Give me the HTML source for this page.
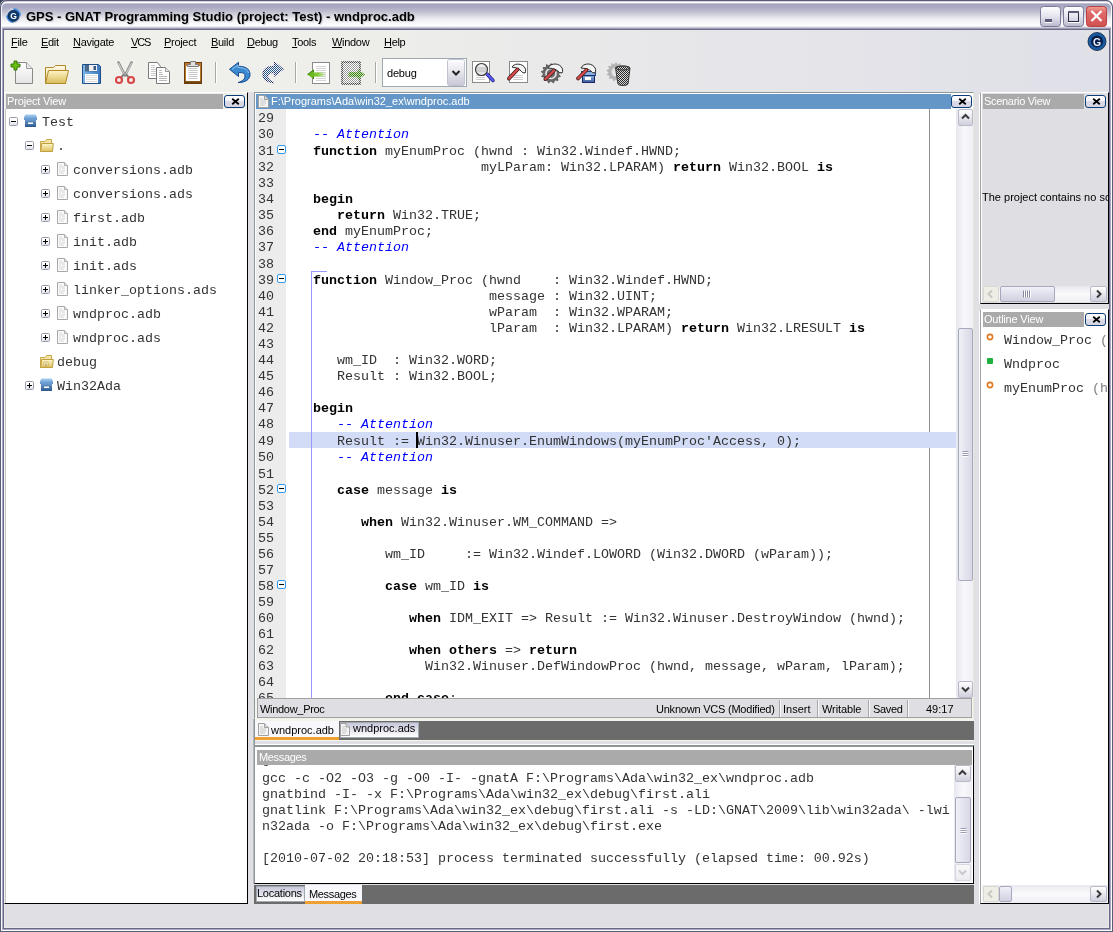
<!DOCTYPE html><html><head><meta charset="utf-8"><style>
*{margin:0;padding:0;box-sizing:border-box}
html,body{width:1113px;height:932px;overflow:hidden}
body{position:relative;background:#3a4658;font-family:"Liberation Sans",sans-serif;font-size:11px;color:#000}
.a{position:absolute}
.t{position:absolute;white-space:pre;line-height:12px}
.m{font-family:"Liberation Mono",monospace;font-size:13.333px;line-height:16px;white-space:pre;position:absolute;color:#333}
.m .k{color:#000}
.k{font-weight:bold}
.c{font-style:italic;color:#0000ff}
#win{will-change:transform;left:0;top:0;width:1113px;height:932px;border-radius:6px 6px 0 0;background:#e0dfe3;overflow:hidden}
#title{left:0;top:0;width:1113px;height:30px;border-radius:7px 7px 0 0;background:linear-gradient(#5c5c7a 0,#5c5c7a 1px,#a8a8c0 1px,#ffffff 2px,#ffffff 3px,#dcdce6 3px,#a5a5c0 4px,#a9a9c3 7px,#bcbccd 11px,#d4d4de 15px,#ececf0 19px,#f8f8fa 23px,#ffffff 26px,#d8d8e4 27px,#b0b0c6 28.3px,#6b6b88 29px,#6b6b88 30px)}
#tframe{left:0;top:0;width:1113px;height:32px;border:1px solid #5c5c7a;border-bottom:none;border-radius:7px 7px 0 0}
#tframe2{left:1px;top:1.5px;width:1111px;height:30px;border:1.5px solid #fff;border-bottom:none;border-radius:6px 6px 0 0;opacity:.9}
#ttext{left:26px;top:9px;font-size:13px;font-weight:bold;line-height:16px;white-space:nowrap;text-shadow:1px 1px 1px rgba(120,120,140,.35)}
#lb{left:0;top:29px;width:4px;height:903px;background:linear-gradient(to right,#5c5c78 0,#5c5c78 1px,#e8e8f0 1px,#e8e8f0 2px,#6e6e8a 2px,#6e6e8a 4px)}
#rb{left:1109px;top:29px;width:4px;height:903px;background:linear-gradient(to right,#6e6e8a 0,#6e6e8a 2px,#e8e8f0 2px,#e8e8f0 3px,#5c5c78 3px)}
#bb{left:0;top:928px;width:1113px;height:4px;background:linear-gradient(#6e6e8a 0,#6e6e8a 2px,#f0f0f6 2px,#f0f0f6 3px,#5c5c78 3px)}
#bar{left:4px;top:30px;width:1105px;height:62px;background:linear-gradient(to right,#f2f2ec 0,#ededea 35%,#e6e6ea 65%,#dfe0e8 100%)}
.menu{top:36px;letter-spacing:-0.3px}
.menu u{text-decoration:underline;text-underline-offset:1px}
.ptitle{background:#aaaaaa;color:#fff;height:15px}
.ptitle span{position:absolute;left:1px;top:1px;line-height:12px;white-space:nowrap}
.xb{width:21px;height:13px;border:1px solid #0a3c78;border-radius:3px;background:linear-gradient(#ffffff 0,#f6f6fa 40%,#dcdce8 50%,#d4d4e2 100%)}
.exp{width:9px;height:9px;border:1px solid #9898a8;border-radius:1.5px;background:linear-gradient(#ffffff 30%,#dfe4ee)}
.exp:before{content:"";position:absolute;left:1px;top:3px;width:5px;height:1px;background:#000;box-shadow:0 0 0.4px #000}
.exp.p:after{content:"";position:absolute;left:3px;top:1px;width:1px;height:5px;background:#000;box-shadow:0 0 0.4px #000}
.fold{width:9px;height:9px;border:1px solid #3399ee;border-radius:2px;background:#fff}
.fold:before{content:"";position:absolute;left:1px;top:3px;width:5px;height:1px;background:#000}
</style></head><body>
<div class="a" style="left:1093px;top:0;width:20px;height:20px;background:#ffffff"></div>
<div id="win" class="a">
<div id="title" class="a"></div><div id="tframe" class="a"></div><div id="tframe2" class="a"></div>
<div id="ttext" class="a">GPS - GNAT Programming Studio (project: Test) - wndproc.adb</div>
<div class="a" style="left:0;top:29px;width:1113px;height:903px;border:1px solid #5c5c78;border-top:none"></div>
<div class="a" style="left:1px;top:29px;width:1111px;height:902px;border:1px solid #fafafc;border-top:none"></div>
<div class="a" style="left:2px;top:29px;width:1109px;height:901px;border:1px solid #a8a8c0;border-top:none"></div>
<div class="a" style="left:3px;top:29px;width:1107px;height:900px;border:1px solid #6a6a88;border-top:none"></div>
<div class="a" style="left:4px;top:904px;width:1105px;height:24px;border-left:1px solid #e8e8ea;border-bottom:1px solid #e8e8ea;border-right:1px solid #e8e8ea"></div>
<div id="bar" class="a"></div>

<svg class="a" style="left:0;top:0" width="1113" height="100" viewBox="0 0 1113 100">
<defs>
 <linearGradient id="gPage" x1="0" y1="0" x2="0" y2="1"><stop offset="0" stop-color="#ffffff"/><stop offset="1" stop-color="#e4e4e4"/></linearGradient>
 <linearGradient id="gFold" x1="0" y1="0" x2="0" y2="1"><stop offset="0" stop-color="#fff4c8"/><stop offset="1" stop-color="#d8bc58"/></linearGradient>
 <linearGradient id="gFoldB" x1="0" y1="0" x2="0" y2="1"><stop offset="0" stop-color="#fffbe8"/><stop offset="1" stop-color="#e8d088"/></linearGradient>
 <linearGradient id="gBlue" x1="0" y1="0" x2="1" y2="0"><stop offset="0" stop-color="#80b8e8"/><stop offset="1" stop-color="#3a78c0"/></linearGradient>
 <linearGradient id="gClip" x1="0" y1="0" x2="0" y2="1"><stop offset="0" stop-color="#c07830"/><stop offset="0.8" stop-color="#b08020"/><stop offset="1" stop-color="#5a3008"/></linearGradient>
 <linearGradient id="gBox" x1="0" y1="0" x2="0" y2="1"><stop offset="0" stop-color="#90b0e0"/><stop offset="1" stop-color="#3a5a98"/></linearGradient>
 <linearGradient id="gRedBtn" x1="0" y1="0" x2="0" y2="1"><stop offset="0" stop-color="#f0a090"/><stop offset="0.3" stop-color="#e06a6a"/><stop offset="1" stop-color="#d05050"/></linearGradient>
 <linearGradient id="gWinBtn" x1="0" y1="0" x2="0" y2="1"><stop offset="0" stop-color="#ffffff"/><stop offset="0.5" stop-color="#e4e4ee"/><stop offset="1" stop-color="#b8b8cc"/></linearGradient>
 <pattern id="dBlue" width="2" height="2" patternUnits="userSpaceOnUse"><rect width="2" height="2" fill="#f4f4f6"/><rect width="1" height="1" fill="#2a5a88"/><rect x="1" y="1" width="1" height="1" fill="#2a5a88"/></pattern>
 <pattern id="dNavy" width="2" height="2" patternUnits="userSpaceOnUse"><rect width="2" height="2" fill="#f4f4f6"/><rect width="1" height="1" fill="#28306a"/><rect x="1" y="1" width="1" height="1" fill="#28306a"/></pattern>
 <pattern id="dGray" width="2" height="2" patternUnits="userSpaceOnUse"><rect width="2" height="2" fill="#ffffff"/><rect width="1" height="1" fill="#9a9a9a"/><rect x="1" y="1" width="1" height="1" fill="#9a9a9a"/></pattern>
 <pattern id="dGreen" width="2" height="2" patternUnits="userSpaceOnUse"><rect width="2" height="2" fill="#c8d8b8"/><rect width="1" height="1" fill="#3a8a10"/><rect x="1" y="1" width="1" height="1" fill="#3a8a10"/></pattern>
 <pattern id="dDark" width="2" height="2" patternUnits="userSpaceOnUse"><rect width="2" height="2" fill="#d8d8d8"/><rect width="1" height="1" fill="#2a2a2a"/><rect x="1" y="1" width="1" height="1" fill="#2a2a2a"/></pattern>
</defs>
<!-- title G logo -->
<circle cx="13.5" cy="15.5" r="7.5" fill="#c8d0e0"/>
<path d="M13.5 8 A7.5 7.5 0 0 1 21 15.5 L18 15.5 A4.5 4.5 0 0 0 13.5 11Z" fill="#4a90e0"/>
<path d="M13.5 23 A7.5 7.5 0 0 1 6 15.5 L9 15.5 A4.5 4.5 0 0 0 13.5 20Z" fill="#4a90e0"/>
<circle cx="13.5" cy="15.8" r="5.6" fill="#0e3a6e" stroke="#061a38" stroke-width="0.6"/>
<text x="13.6" y="18.8" font-family="Liberation Sans" font-weight="bold" font-size="8.5" fill="#fff" text-anchor="middle">G</text>
<!-- window buttons -->
<rect x="1040.5" y="6.5" width="20" height="20" rx="3" fill="url(#gWinBtn)" stroke="#7a7a98"/>
<rect x="1045" y="19" width="7" height="3" fill="#5a5a78"/><rect x="1045" y="22" width="7" height="1" fill="#fff"/>
<rect x="1063.5" y="6.5" width="20" height="20" rx="3" fill="url(#gWinBtn)" stroke="#7a7a98"/>
<rect x="1068.5" y="11.5" width="10" height="10" fill="none" stroke="#2a2a40"/><rect x="1068" y="11" width="11" height="2" fill="#5a5a78"/><rect x="1068" y="22" width="12" height="1" fill="#fff"/>
<rect x="1086.5" y="6.5" width="20" height="20" rx="3" fill="url(#gRedBtn)" stroke="#b84040"/>
<path d="M1091.5 11 L1101.5 21 M1101.5 11 L1091.5 21" stroke="#fff" stroke-width="2.2"/>
<!-- right G logo -->
<rect x="1085" y="30" width="23" height="24" fill="#e2e2e6"/>
<circle cx="1097" cy="41.5" r="9" fill="#1a5aa0" stroke="#0a2040" stroke-width="0.8"/>
<circle cx="1097" cy="41.5" r="6" fill="#061e48"/>
<text x="1097.2" y="45.5" font-family="Liberation Sans" font-weight="bold" font-size="10.5" fill="#e8f0ff" text-anchor="middle">G</text>

<!-- new -->
<path d="M15.5 62.5 H26.5 L32.5 68.5 V83.5 H15.5Z" fill="url(#gPage)" stroke="#8a8a8a"/>
<path d="M26.5 62.5 V68.5 H32.5" fill="#e8e8e8" stroke="#9a9a9a"/>
<path d="M14 61 h3 v3 h3 v3 h-3 v3 h-3 v-3 h-3 v-3 h3z" fill="#6ac010" stroke="#2a7000" stroke-width="0.9"/>
<!-- open -->
<path d="M45.5 83.5 V67.5 H53.5 L55.5 65.5 H65.5 V83.5Z" fill="url(#gFoldB)" stroke="#b08a28"/>
<path d="M45.5 83.5 L48.5 70.5 H68.5 L65.5 83.5Z" fill="url(#gFold)" stroke="#b08a28"/>
<!-- save -->
<path d="M82.5 64.5 H98.5 L100.5 66.5 V83.5 H82.5Z" fill="url(#gBlue)" stroke="#1e4e88"/>
<rect x="85" y="65" width="12" height="6.5" fill="#4a6a8a"/>
<rect x="89" y="65" width="8" height="6" fill="#f0f0f0"/>
<rect x="93.5" y="66" width="2.5" height="4" fill="#3a5a80"/>
<rect x="85" y="74" width="13" height="9" fill="#ffffff"/>
<path d="M86 75.5 H97 M86 77.5 H97 M86 79.5 H97 M86 81.5 H97" stroke="#dcdcdc" stroke-width="1"/>
<!-- cut -->
<path d="M118.5 62.5 L125 75.5 M131.5 62.5 L125 75.5" stroke="#8a8a8a" stroke-width="2.6" stroke-linecap="round"/>
<path d="M118.5 63 L124.5 75 M131.5 63 L125.5 75" stroke="#e8e8e8" stroke-width="0.9"/>
<path d="M124 74 L120.5 78.5 M126 74 L129.5 78.5" stroke="#7a7a7a" stroke-width="2"/>
<circle cx="119" cy="80" r="3" fill="none" stroke="#d84848" stroke-width="2.2"/>
<circle cx="131" cy="80" r="3" fill="none" stroke="#d84848" stroke-width="2.2"/>
<!-- copy -->
<path d="M148.5 62.5 H157.5 L160.5 66.5 V78.5 H148.5Z" fill="#fff" stroke="#7a7a7a"/>
<path d="M151 65.5 h4 M151 67.5 h4 M151 69.5 h5 M151 71.5 h6 M151 73.5 h6 M151 75.5 h6" stroke="#c8c8c8"/>
<path d="M156.5 67.5 H165.5 L169.5 71.5 V83.5 H156.5Z" fill="#fff" stroke="#7a7a7a"/>
<path d="M165.5 67.5 V71.5 H169.5" fill="#e8e8e8" stroke="#9a9a9a"/>
<path d="M159 70.5 h3 M159 72.5 h3 M159 74.5 h4 M159 76.5 h8 M159 78.5 h8 M159 80.5 h8" stroke="#b8b8b8"/>
<!-- paste -->
<rect x="184.5" y="62.5" width="17" height="21" fill="url(#gClip)" stroke="#6a3a10"/>
<rect x="186" y="66" width="14" height="15" fill="#ffffff"/>
<path d="M188.5 68.5 h9 M188.5 70.5 h9 M188.5 72.5 h9 M188.5 74.5 h9 M188.5 76.5 h9 M188.5 78.5 h9" stroke="#c8c8c8"/>
<path d="M190.5 61.5 h5 v3 h3 v2 h-11 v-2 h3z" fill="#e0e0e0" stroke="#7a7a7a"/>
<!-- separators -->
<rect x="215" y="62" width="1" height="21" fill="#a8a8a8"/><rect x="216" y="62" width="1" height="21" fill="#ffffff"/>
<rect x="295" y="62" width="1" height="21" fill="#a8a8a8"/><rect x="296" y="62" width="1" height="21" fill="#ffffff"/>
<rect x="375" y="62" width="1" height="21" fill="#a8a8a8"/><rect x="376" y="62" width="1" height="21" fill="#ffffff"/>
<!-- undo -->
<path d="M229.5 69.3 L238.5 62.3 V66.3 C247 66.3 250 70 250 74.5 C250 79 246 82.5 238 82.6 C243 81 245 79 245 76 C245 73 242.5 72.5 238.5 72.5 V76.5Z" fill="#3a8ad0" stroke="#1a4a90" stroke-linejoin="round"/>
<path d="M232 69.3 L238 65 V67.5 C244 67.5 247.5 69.5 248.5 73" fill="none" stroke="#90c8f0" stroke-width="1"/>
<!-- redo (disabled) -->
<path d="M283 69.3 L274.5 62.3 V66.3 C266 66.3 263 70 263 74.5 C263 79 267 82.5 274 82.6 C269 81 267.5 79 267.5 76 C267.5 73 270 72.5 274.5 72.5 V75.7Z" fill="url(#dBlue)" stroke="url(#dNavy)" stroke-width="1.2"/>
<!-- back -->
<rect x="312.5" y="62.5" width="17" height="21" fill="#fff" stroke="#8a8a8a"/>
<path d="M316 66.5 h10 M316 68.5 h10 M316 70.5 h10 M316 72.5 h10 M316 74.5 h10 M316 76.5 h10 M316 78.5 h10 M316 80.5 h10" stroke="#d4d4d4"/>
<linearGradient id="gArr" x1="0" y1="0" x2="1" y2="0"><stop offset="0" stop-color="#5aaa10"/><stop offset="0.6" stop-color="#8ad040"/><stop offset="1" stop-color="#8ad040" stop-opacity="0"/></linearGradient>
<path d="M307.5 74.5 L313.5 70 V72.5 H326 V76.5 H313.5 V79Z" fill="url(#gArr)"/>
<path d="M307.5 74.5 L313.5 70 V72.5 M313.5 76.5 V79Z" fill="none" stroke="#3a8000"/>
<!-- forward (disabled) -->
<rect x="342" y="62" width="18" height="22" fill="url(#dGray)" stroke="url(#dDark)" stroke-width="1.4"/>
<path d="M349 72.5 H358 V70 L364.5 74.5 L358 79 V76.5 H349Z" fill="url(#dGreen)" stroke="url(#dGreen)" stroke-width="0.8"/>
<!-- combo -->
<rect x="382.5" y="58.5" width="84" height="28" fill="#fff" stroke="#a0a8b4"/>
<linearGradient id="gCombo" x1="0" y1="0" x2="0" y2="1"><stop offset="0" stop-color="#ffffff"/><stop offset="1" stop-color="#c8c8d8"/></linearGradient>
<rect x="447.5" y="59.5" width="17" height="26" rx="2" fill="url(#gCombo)" stroke="#c0c4d0"/>
<path d="M452.5 71 L456 74.5 L459.5 71" fill="none" stroke="#222" stroke-width="2"/>
<!-- check -->
<rect x="472.5" y="61.5" width="17" height="21" fill="#fff" stroke="#8a8a8a"/>
<path d="M476 75.5 h9 M476 77.5 h9 M476 79.5 h9" stroke="#d0d0d0"/>
<line x1="487" y1="74" x2="493" y2="80.5" stroke="#1a1a70" stroke-width="3.4" stroke-linecap="round"/>
<line x1="487" y1="74" x2="493" y2="80.5" stroke="#5a5af8" stroke-width="2.2" stroke-linecap="round"/>
<linearGradient id="gLens" x1="0" y1="0" x2="0" y2="1"><stop offset="0" stop-color="#ffffff"/><stop offset="0.5" stop-color="#d8d8d8"/><stop offset="1" stop-color="#f0f0f0"/></linearGradient>
<circle cx="481.5" cy="69.5" r="6" fill="url(#gLens)" stroke="#3a3a3a" stroke-width="1.2"/>
<path d="M477 68 h9 M477 71 h9" stroke="#c0c0c0"/>
<!-- compile -->
<rect x="509.5" y="61.5" width="18" height="21" fill="#fff" stroke="#8a8a8a"/>
<path d="M513 75.5 h10 M513 77.5 h10 M513 79.5 h10" stroke="#d0d0d0"/>
<path d="M512 67 C514 63.5 520 63 524 66.5 C526 68.5 526 71 525 73 L522.5 72.5 C521 70.5 519 69 516.5 68 Z" fill="#f4f4f4" stroke="#2a2a2a"/>
<line x1="517.5" y1="69.5" x2="509" y2="78.5" stroke="#3a1a1a" stroke-width="3.8" stroke-linecap="round"/>
<line x1="517.5" y1="69.5" x2="509" y2="78.5" stroke="#d84a4a" stroke-width="2.4" stroke-linecap="round"/>
<!-- build (gear+hammer) -->
<g transform="translate(551,73.5)">
<path d="M0 -10 L1.8 -7.5 L4.5 -9 L4.8 -6 L8 -6 L6.8 -3.2 L9.8 -1.8 L7.4 0.5 L9.5 3 L6.5 3.8 L7 7 L3.8 6.5 L2.5 9.5 L0 7.5 L-2.5 9.5 L-3.8 6.5 L-7 7 L-6.5 3.8 L-9.5 3 L-7.4 0.5 L-9.8 -1.8 L-6.8 -3.2 L-8 -6 L-4.8 -6 L-4.5 -9 L-1.8 -7.5Z" fill="#6a6a6a" stroke="#3a3a3a" stroke-width="0.6"/>
<circle r="5" fill="none" stroke="#e8e8e8" stroke-width="1.6"/>
</g>
<path d="M548 68 C550 63.5 557 62.5 561 66.5 C563 68.5 563 71 562 73 L559.5 72.5 C558 70.5 555.5 69.5 552.5 68.5 Z" fill="#f4f4f4" stroke="#2a2a2a"/>
<line x1="554" y1="70.5" x2="545.5" y2="79" stroke="#3a1a1a" stroke-width="3.8" stroke-linecap="round"/>
<line x1="554" y1="70.5" x2="545.5" y2="79" stroke="#d84a4a" stroke-width="2.4" stroke-linecap="round"/>
<!-- build all (box+hammer) -->
<rect x="581.5" y="71.5" width="14" height="4" fill="#8ab0e0" stroke="#2a4a88"/>
<rect x="582.5" y="75.5" width="12" height="7" fill="url(#gBox)" stroke="#1a2a68"/>
<rect x="585" y="77" width="6" height="3" fill="#fff"/>
<path d="M581 68 C583 63.5 590 62.5 594 66.5 C596 68.5 596 71 595 73 L592.5 72.5 C591 70.5 588.5 69.5 585.5 68.5 Z" fill="#f4f4f4" stroke="#2a2a2a"/>
<line x1="586.5" y1="70" x2="578" y2="78.5" stroke="#3a1a1a" stroke-width="3.8" stroke-linecap="round"/>
<line x1="586.5" y1="70" x2="578" y2="78.5" stroke="#d84a4a" stroke-width="2.4" stroke-linecap="round"/>
<!-- clean (gear + trash) -->
<g transform="translate(616,72)">
<path d="M0 -10 L1.8 -7.5 L4.5 -9 L4.8 -6 L8 -6 L6.8 -3.2 L9.8 -1.8 L7.4 0.5 L9.5 3 L6.5 3.8 L7 7 L3.8 6.5 L2.5 9.5 L0 7.5 L-2.5 9.5 L-3.8 6.5 L-7 7 L-6.5 3.8 L-9.5 3 L-7.4 0.5 L-9.8 -1.8 L-6.8 -3.2 L-8 -6 L-4.8 -6 L-4.5 -9 L-1.8 -7.5Z" fill="#b4b4b4"/>
<circle r="4.5" fill="#e4e4e8"/>
</g>
<path d="M615.5 68 C615.5 65.5 630 65.5 630 68 L628 84 C627 86 619 86 618 84Z" fill="url(#dDark)" stroke="#3a3a3a"/>
<ellipse cx="622.7" cy="68" rx="7" ry="2" fill="none" stroke="#3a3a3a"/>
</svg>

<div class="t" style="left:387px;top:67px;letter-spacing:-0.2px">debug</div>
<div class="t menu" style="left:11px"><u>F</u>ile</div>
<div class="t menu" style="left:41px"><u>E</u>dit</div>
<div class="t menu" style="left:73px"><u>N</u>avigate</div>
<div class="t menu" style="left:131px;letter-spacing:-1.2px"><u>V</u>CS</div>
<div class="t menu" style="left:164px"><u>P</u>roject</div>
<div class="t menu" style="left:211px"><u>B</u>uild</div>
<div class="t menu" style="left:247px"><u>D</u>ebug</div>
<div class="t menu" style="left:292px"><u>T</u>ools</div>
<div class="t menu" style="left:332px"><u>W</u>indow</div>
<div class="t menu" style="left:384px"><u>H</u>elp</div>
<div class="a" style="left:4px;top:92px;width:244px;height:812px;background:#fff;border-left:1px solid #f4f4f4;border-top:1px solid #fff;border-right:1px solid #000;border-bottom:1px solid #000"></div>
<div class="a" style="left:5px;top:93px;width:242px;height:16px;background:#eeeeea"></div>
<div class="a" style="left:5px;top:109px;width:1px;height:794px;background:#c8c8c8"></div>
<div class="a ptitle" style="left:6px;top:94px;width:217px"><span style="letter-spacing:-0.15px">Project View</span></div>
<div class="a xb" style="left:224px;top:95px"><svg class="a" style="left:6px;top:2px" width="9" height="8" viewBox="0 0 9 8"><path d="M1.2 0.8 L7.8 6.2 M7.8 0.8 L1.2 6.2" stroke="#000" stroke-width="1.8"/></svg></div>
<div class="a exp" style="left:9px;top:117px"></div>
<svg class="a" style="left:24px;top:114px" width="14" height="14" viewBox="0 0 14 14"><defs><linearGradient id="pl" x1="0" y1="0" x2="0" y2="1"><stop offset="0" stop-color="#a8d0f0"/><stop offset="1" stop-color="#5a90c8"/></linearGradient><linearGradient id="pb" x1="0" y1="0" x2="0" y2="1"><stop offset="0" stop-color="#6a98c8"/><stop offset="1" stop-color="#2a5890"/></linearGradient></defs><path d="M1.5 0.5 H11.5 L13 3 V6 H0 V3Z" fill="url(#pl)"/><rect x="0.5" y="4.5" width="12.5" height="1.5" fill="#6a9ad0"/><rect x="1" y="6" width="11" height="7" fill="url(#pb)"/><rect x="4" y="8.5" width="5" height="1.5" fill="#fff"/></svg>
<div class="m" style="left:42px;top:115px">Test</div>
<div class="a exp" style="left:25px;top:141px"></div>
<svg class="a" style="left:40px;top:139px" width="14" height="13" viewBox="0 0 14 13"><defs><linearGradient id="fo" x1="0" y1="0" x2="0" y2="1"><stop offset="0" stop-color="#fff6cc"/><stop offset="1" stop-color="#dcc060"/></linearGradient></defs><path d="M0.5 12.5 V2.5 H5 L6.5 0.5 H11.5 V12.5Z" fill="#f4e4a8" stroke="#c8a848"/><path d="M0.5 12.5 L1.8 4.5 H13.3 L12.5 12.5Z" fill="url(#fo)" stroke="#c0a040"/></svg>
<div class="m" style="left:57px;top:139px">.</div>
<div class="a exp p" style="left:41px;top:165px"></div>
<svg class="a" style="left:57px;top:162px" width="12" height="14" viewBox="0 0 12 14"><path d="M0.5 0.5 H7.5 L10.5 3.5 V13.5 H0.5Z" fill="#fafafa" stroke="#a8a8a8"/><path d="M7.5 0.5 V3.5 H10.5" fill="#e0e0e0" stroke="#b0b0b0"/><path d="M2 3 h3 M2 5 h6 M2 7 h2 M5 7 h3 M2 9 h6 M2 11 h5" stroke="#d8d8d8"/></svg>
<div class="m" style="left:73px;top:163px">conversions.adb</div>
<div class="a exp p" style="left:41px;top:189px"></div>
<svg class="a" style="left:57px;top:186px" width="12" height="14" viewBox="0 0 12 14"><path d="M0.5 0.5 H7.5 L10.5 3.5 V13.5 H0.5Z" fill="#fafafa" stroke="#a8a8a8"/><path d="M7.5 0.5 V3.5 H10.5" fill="#e0e0e0" stroke="#b0b0b0"/><path d="M2 3 h3 M2 5 h6 M2 7 h2 M5 7 h3 M2 9 h6 M2 11 h5" stroke="#d8d8d8"/></svg>
<div class="m" style="left:73px;top:187px">conversions.ads</div>
<div class="a exp p" style="left:41px;top:213px"></div>
<svg class="a" style="left:57px;top:210px" width="12" height="14" viewBox="0 0 12 14"><path d="M0.5 0.5 H7.5 L10.5 3.5 V13.5 H0.5Z" fill="#fafafa" stroke="#a8a8a8"/><path d="M7.5 0.5 V3.5 H10.5" fill="#e0e0e0" stroke="#b0b0b0"/><path d="M2 3 h3 M2 5 h6 M2 7 h2 M5 7 h3 M2 9 h6 M2 11 h5" stroke="#d8d8d8"/></svg>
<div class="m" style="left:73px;top:211px">first.adb</div>
<div class="a exp p" style="left:41px;top:237px"></div>
<svg class="a" style="left:57px;top:234px" width="12" height="14" viewBox="0 0 12 14"><path d="M0.5 0.5 H7.5 L10.5 3.5 V13.5 H0.5Z" fill="#fafafa" stroke="#a8a8a8"/><path d="M7.5 0.5 V3.5 H10.5" fill="#e0e0e0" stroke="#b0b0b0"/><path d="M2 3 h3 M2 5 h6 M2 7 h2 M5 7 h3 M2 9 h6 M2 11 h5" stroke="#d8d8d8"/></svg>
<div class="m" style="left:73px;top:235px">init.adb</div>
<div class="a exp p" style="left:41px;top:261px"></div>
<svg class="a" style="left:57px;top:258px" width="12" height="14" viewBox="0 0 12 14"><path d="M0.5 0.5 H7.5 L10.5 3.5 V13.5 H0.5Z" fill="#fafafa" stroke="#a8a8a8"/><path d="M7.5 0.5 V3.5 H10.5" fill="#e0e0e0" stroke="#b0b0b0"/><path d="M2 3 h3 M2 5 h6 M2 7 h2 M5 7 h3 M2 9 h6 M2 11 h5" stroke="#d8d8d8"/></svg>
<div class="m" style="left:73px;top:259px">init.ads</div>
<div class="a exp p" style="left:41px;top:285px"></div>
<svg class="a" style="left:57px;top:282px" width="12" height="14" viewBox="0 0 12 14"><path d="M0.5 0.5 H7.5 L10.5 3.5 V13.5 H0.5Z" fill="#fafafa" stroke="#a8a8a8"/><path d="M7.5 0.5 V3.5 H10.5" fill="#e0e0e0" stroke="#b0b0b0"/><path d="M2 3 h3 M2 5 h6 M2 7 h2 M5 7 h3 M2 9 h6 M2 11 h5" stroke="#d8d8d8"/></svg>
<div class="m" style="left:73px;top:283px">linker_options.ads</div>
<div class="a exp p" style="left:41px;top:309px"></div>
<svg class="a" style="left:57px;top:306px" width="12" height="14" viewBox="0 0 12 14"><path d="M0.5 0.5 H7.5 L10.5 3.5 V13.5 H0.5Z" fill="#fafafa" stroke="#a8a8a8"/><path d="M7.5 0.5 V3.5 H10.5" fill="#e0e0e0" stroke="#b0b0b0"/><path d="M2 3 h3 M2 5 h6 M2 7 h2 M5 7 h3 M2 9 h6 M2 11 h5" stroke="#d8d8d8"/></svg>
<div class="m" style="left:73px;top:307px">wndproc.adb</div>
<div class="a exp p" style="left:41px;top:333px"></div>
<svg class="a" style="left:57px;top:330px" width="12" height="14" viewBox="0 0 12 14"><path d="M0.5 0.5 H7.5 L10.5 3.5 V13.5 H0.5Z" fill="#fafafa" stroke="#a8a8a8"/><path d="M7.5 0.5 V3.5 H10.5" fill="#e0e0e0" stroke="#b0b0b0"/><path d="M2 3 h3 M2 5 h6 M2 7 h2 M5 7 h3 M2 9 h6 M2 11 h5" stroke="#d8d8d8"/></svg>
<div class="m" style="left:73px;top:331px">wndproc.ads</div>
<svg class="a" style="left:40px;top:355px" width="14" height="13" viewBox="0 0 14 13"><defs><linearGradient id="fo" x1="0" y1="0" x2="0" y2="1"><stop offset="0" stop-color="#fff6cc"/><stop offset="1" stop-color="#dcc060"/></linearGradient></defs><path d="M0.5 12.5 V2.5 H5 L6.5 0.5 H11.5 V12.5Z" fill="#f4e4a8" stroke="#c8a848"/><path d="M0.5 12.5 L1.8 4.5 H13.3 L12.5 12.5Z" fill="url(#fo)" stroke="#c0a040"/><rect x="4" y="7" width="4" height="4" fill="#fff8d8" stroke="#c0a040" stroke-width="0.6"/><text x="6" y="10.5" font-size="4" text-anchor="middle" fill="#806010" font-family="Liberation Sans">0</text></svg>
<div class="m" style="left:57px;top:355px">debug</div>
<div class="a exp p" style="left:25px;top:381px"></div>
<svg class="a" style="left:40px;top:378px" width="14" height="14" viewBox="0 0 14 14"><defs><linearGradient id="pl" x1="0" y1="0" x2="0" y2="1"><stop offset="0" stop-color="#a8d0f0"/><stop offset="1" stop-color="#5a90c8"/></linearGradient><linearGradient id="pb" x1="0" y1="0" x2="0" y2="1"><stop offset="0" stop-color="#6a98c8"/><stop offset="1" stop-color="#2a5890"/></linearGradient></defs><path d="M1.5 0.5 H11.5 L13 3 V6 H0 V3Z" fill="url(#pl)"/><rect x="0.5" y="4.5" width="12.5" height="1.5" fill="#6a9ad0"/><rect x="1" y="6" width="11" height="7" fill="url(#pb)"/><rect x="4" y="8.5" width="5" height="1.5" fill="#fff"/></svg>
<div class="m" style="left:57px;top:379px">Win32Ada</div>
<div class="a" style="left:254px;top:92px;width:720px;height:627px;background:#fff;border:1px solid #8c9898;border-right-color:#e8e8dc;border-bottom-color:#f0f0e8"></div>
<div class="a" style="left:256px;top:94px;width:695px;height:15px;background:#6497c8"></div>
<svg class="a" style="left:258px;top:95px" width="11" height="13" viewBox="0 0 11 13"><path d="M0.5 0.5 H6.5 L10.5 4.5 V12.5 H0.5Z" fill="#f4f4f4" stroke="#a0a0a0"/><path d="M6.5 0.5 V4.5 H10.5" fill="#d8d8d8" stroke="#a0a0a0"/><path d="M2 4 h3 M2 6 h6 M2 8 h6 M2 10 h5" stroke="#c8c8c8"/></svg>
<div class="t" style="left:271px;top:95px;color:#fff">F:\Programs\Ada\win32_ex\wndproc.adb</div>
<div class="a xb" style="left:951px;top:95px"><svg class="a" style="left:6px;top:2px" width="9" height="8" viewBox="0 0 9 8"><path d="M1.2 0.8 L7.8 6.2 M7.8 0.8 L1.2 6.2" stroke="#000" stroke-width="1.8"/></svg></div>
<div class="a" style="left:256px;top:109px;width:30px;height:589px;background:#ececec"></div>
<div class="a" style="left:929px;top:109px;width:1px;height:589px;background:#909090"></div>
<div class="a" style="left:256px;top:109px;width:700px;height:589px;overflow:hidden">
<div class="m" style="left:2px;top:2px">29</div>
<div class="m" style="left:2px;top:18px">30</div>
<div class="m" style="left:57px;top:18px"><span class="c">-- Attention</span></div>
<div class="m" style="left:2px;top:35px">31</div>
<div class="a fold" style="left:21px;top:36px"></div>
<div class="m" style="left:57px;top:35px"><span class="k">function</span> myEnumProc (hwnd : Win32.Windef.HWND;</div>
<div class="m" style="left:2px;top:51px">32</div>
<div class="m" style="left:57px;top:51px">                     myLParam: Win32.LPARAM) <span class="k">return</span> Win32.BOOL <span class="k">is</span></div>
<div class="m" style="left:2px;top:67px">33</div>
<div class="m" style="left:2px;top:83px">34</div>
<div class="m" style="left:57px;top:83px"><span class="k">begin</span></div>
<div class="m" style="left:2px;top:99px">35</div>
<div class="m" style="left:57px;top:99px">   <span class="k">return</span> Win32.TRUE;</div>
<div class="m" style="left:2px;top:115px">36</div>
<div class="m" style="left:57px;top:115px"><span class="k">end</span> myEnumProc;</div>
<div class="m" style="left:2px;top:131px">37</div>
<div class="m" style="left:57px;top:131px"><span class="c">-- Attention</span></div>
<div class="m" style="left:2px;top:148px">38</div>
<div class="m" style="left:2px;top:164px">39</div>
<div class="a fold" style="left:21px;top:165px"></div>
<div class="m" style="left:57px;top:164px"><span class="k">function</span> Window_Proc (hwnd    : Win32.Windef.HWND;</div>
<div class="m" style="left:2px;top:180px">40</div>
<div class="m" style="left:57px;top:180px">                      message : Win32.UINT;</div>
<div class="m" style="left:2px;top:196px">41</div>
<div class="m" style="left:57px;top:196px">                      wParam  : Win32.WPARAM;</div>
<div class="m" style="left:2px;top:212px">42</div>
<div class="m" style="left:57px;top:212px">                      lParam  : Win32.LPARAM) <span class="k">return</span> Win32.LRESULT <span class="k">is</span></div>
<div class="m" style="left:2px;top:228px">43</div>
<div class="m" style="left:2px;top:244px">44</div>
<div class="m" style="left:57px;top:244px">   wm_ID  : Win32.WORD;</div>
<div class="m" style="left:2px;top:260px">45</div>
<div class="m" style="left:57px;top:260px">   Result : Win32.BOOL;</div>
<div class="m" style="left:2px;top:276px">46</div>
<div class="m" style="left:2px;top:292px">47</div>
<div class="m" style="left:57px;top:292px"><span class="k">begin</span></div>
<div class="m" style="left:2px;top:308px">48</div>
<div class="m" style="left:57px;top:308px">   <span class="c">-- Attention</span></div>
<div class="a" style="left:33px;top:323px;width:667px;height:16px;background:#d2dcf6"></div>
<div class="m" style="left:2px;top:325px">49</div>
<div class="m" style="left:57px;top:325px">   Result := Win32.Winuser.EnumWindows(myEnumProc&#x27;Access, 0);</div>
<div class="m" style="left:2px;top:341px">50</div>
<div class="m" style="left:57px;top:341px">   <span class="c">-- Attention</span></div>
<div class="m" style="left:2px;top:358px">51</div>
<div class="m" style="left:2px;top:374px">52</div>
<div class="a fold" style="left:21px;top:375px"></div>
<div class="m" style="left:57px;top:374px">   <span class="k">case</span> message <span class="k">is</span></div>
<div class="m" style="left:2px;top:390px">53</div>
<div class="m" style="left:2px;top:406px">54</div>
<div class="m" style="left:57px;top:406px">      <span class="k">when</span> Win32.Winuser.WM_COMMAND =&gt;</div>
<div class="m" style="left:2px;top:422px">55</div>
<div class="m" style="left:2px;top:438px">56</div>
<div class="m" style="left:57px;top:438px">         wm_ID     := Win32.Windef.LOWORD (Win32.DWORD (wParam));</div>
<div class="m" style="left:2px;top:454px">57</div>
<div class="m" style="left:2px;top:470px">58</div>
<div class="a fold" style="left:21px;top:471px"></div>
<div class="m" style="left:57px;top:470px">         <span class="k">case</span> wm_ID <span class="k">is</span></div>
<div class="m" style="left:2px;top:486px">59</div>
<div class="m" style="left:2px;top:502px">60</div>
<div class="m" style="left:57px;top:502px">            <span class="k">when</span> IDM_EXIT =&gt; Result := Win32.Winuser.DestroyWindow (hwnd);</div>
<div class="m" style="left:2px;top:518px">61</div>
<div class="m" style="left:2px;top:534px">62</div>
<div class="m" style="left:57px;top:534px">            <span class="k">when others</span> =&gt; <span class="k">return</span></div>
<div class="m" style="left:2px;top:550px">63</div>
<div class="m" style="left:57px;top:550px">              Win32.Winuser.DefWindowProc (hwnd, message, wParam, lParam);</div>
<div class="m" style="left:2px;top:566px">64</div>
<div class="m" style="left:2px;top:582px">65</div>
<div class="m" style="left:57px;top:582px">         <span class="k">end case</span>;</div>
<div class="a" style="left:55px;top:162px;width:1px;height:427px;background:#9999ff"></div>
<div class="a" style="left:55px;top:162px;width:16px;height:1px;background:#9999ff"></div>
<div class="a" style="left:160px;top:323px;width:2px;height:16px;background:#000"></div>
</div>
<div class="a" style="left:956px;top:109px;width:17px;height:589px;background:linear-gradient(to right,#e6e6ee,#f8f8fc 50%,#eeeef4)"></div>
<div class="a" style="left:958px;top:109px;width:15px;height:17px;border:1px solid #b8b8c8;border-radius:2px;background:linear-gradient(#ffffff,#d0d0de)"></div>
<div class="a" style="left:958px;top:328px;width:15px;height:253px;border:1px solid #a8a8bc;border-radius:2px;background:linear-gradient(to right,#f0f0f8,#d8d8e6)"></div>
<div class="a" style="left:958px;top:681px;width:15px;height:17px;border:1px solid #b8b8c8;border-radius:2px;background:linear-gradient(#ffffff,#d0d0de)"></div>
<svg class="a" style="left:958px;top:109px" width="15" height="16" viewBox="0 0 15 16"><path d="M4 9.5 L7.5 6 L11 9.5" fill="none" stroke="#3a3a3a" stroke-width="2"/></svg>
<svg class="a" style="left:958px;top:681px" width="15" height="16" viewBox="0 0 15 16"><path d="M4 6.5 L7.5 10 L11 6.5" fill="none" stroke="#3a3a3a" stroke-width="2"/></svg>
<svg class="a" style="left:958px;top:450px" width="15" height="8" viewBox="0 0 15 8"><path d="M4.5 1.5 h6 M4.5 3.5 h6 M4.5 5.5 h6" stroke="#9a9ab0" stroke-width="1"/><path d="M4.5 2.5 h6 M4.5 4.5 h6 M4.5 6.5 h6" stroke="#ffffff" stroke-width="1"/></svg>
<div class="a" style="left:255px;top:698px;width:718px;height:20px;background:#f4f4f0"></div>
<div class="a" style="left:257px;top:698px;width:715px;height:20px;background:#dfdfe3;border-top:1px solid #a0a0a0;border-left:1px solid #a0a0a0;border-bottom:1px solid #a0a0a0"></div>
<div class="t" style="left:260px;top:703px;letter-spacing:-0.3px">Window_Proc</div>
<div class="t" style="left:656px;top:703px;letter-spacing:-0.22px">Unknown VCS (Modified)</div>
<div class="t" style="left:783px;top:703px;letter-spacing:0px">Insert</div>
<div class="t" style="left:822px;top:703px;letter-spacing:-0.1px">Writable</div>
<div class="t" style="left:873px;top:703px;letter-spacing:-0.3px">Saved</div>
<div class="t" style="left:926px;top:703px;letter-spacing:0px">49:17</div>
<div class="a" style="left:779px;top:700px;width:1px;height:17px;background:#a8a8a8"></div><div class="a" style="left:780px;top:700px;width:1px;height:17px;background:#f8f8f8"></div>
<div class="a" style="left:817px;top:700px;width:1px;height:17px;background:#a8a8a8"></div><div class="a" style="left:818px;top:700px;width:1px;height:17px;background:#f8f8f8"></div>
<div class="a" style="left:868px;top:700px;width:1px;height:17px;background:#a8a8a8"></div><div class="a" style="left:869px;top:700px;width:1px;height:17px;background:#f8f8f8"></div>
<div class="a" style="left:907px;top:700px;width:1px;height:17px;background:#a8a8a8"></div><div class="a" style="left:908px;top:700px;width:1px;height:17px;background:#f8f8f8"></div>
<div class="a" style="left:971px;top:699px;width:1px;height:18px;background:#a8a8a8"></div>
<div class="a" style="left:254px;top:719px;width:720px;height:22px;background:#f4f4ee"></div>
<div class="a" style="left:255px;top:721px;width:719px;height:19px;background:#6b6b6b"></div>
<div class="a" style="left:255px;top:721px;width:84px;height:19px;background:#f8f8fc;border-bottom:3px solid #f0a030"></div>
<svg class="a" style="left:258px;top:723px" width="11" height="13" viewBox="0 0 11 13"><path d="M0.5 0.5 H6.5 L10.5 4.5 V12.5 H0.5Z" fill="#f4f4f4" stroke="#a0a0a0"/><path d="M6.5 0.5 V4.5 H10.5" fill="#d8d8d8" stroke="#a0a0a0"/><path d="M2 4 h3 M2 6 h6 M2 8 h6 M2 10 h5" stroke="#c8c8c8"/></svg>
<div class="t" style="left:271px;top:724px">wndproc.adb</div>
<div class="a" style="left:340px;top:722px;width:79px;height:16px;background:linear-gradient(#c8c8dc,#ffffff);border:1px solid #a0a8b0"></div>
<svg class="a" style="left:340px;top:723px" width="10" height="13" viewBox="0 0 10 13"><path d="M0.5 0.5 H6 L9.5 4 V12.5 H0.5Z" fill="#f4f4f4" stroke="#a0a0a0"/><path d="M6 0.5 V4 H9.5" fill="#d8d8d8" stroke="#a0a0a0"/><path d="M2 4 h3 M2 6 h5 M2 8 h5 M2 10 h4" stroke="#c8c8c8"/></svg>
<div class="t" style="left:353px;top:722px">wndproc.ads</div>
<div class="a" style="left:254px;top:744px;width:720px;height:1px;background:#fff"></div>
<div class="a" style="left:254px;top:745px;width:720px;height:139px;background:#fff;border-top:2px solid #8c9898;border-left:1px solid #909a9a;border-right:1px solid #000;border-bottom:1px solid #000"></div>
<div class="a ptitle" style="left:257px;top:750px;width:715px"><span style="left:2px;letter-spacing:-0.35px">Messages</span></div>
<div class="a" style="left:253px;top:719px;width:1px;height:165px;background:#b4b8bc"></div><div class="a" style="left:254px;top:719px;width:1px;height:26px;background:#8c9898"></div>
<div class="a" style="left:256px;top:765px;width:698px;height:117px;overflow:hidden">
<div class="m" style="left:6px;top:6px">gcc -c -O2 -O3 -g -O0 -I- -gnatA F:\Programs\Ada\win32_ex\wndproc.adb</div>
<div class="m" style="left:6px;top:22px">gnatbind -I- -x F:\Programs\Ada\win32_ex\debug\first.ali</div>
<div class="m" style="left:6px;top:38px">gnatlink F:\Programs\Ada\win32_ex\debug\first.ali -s -LD:\GNAT\2009\lib\win32ada\ -lwi</div>
<div class="m" style="left:6px;top:54px">n32ada -o F:\Programs\Ada\win32_ex\debug\first.exe</div>
<div class="m" style="left:6px;top:70px"></div>
<div class="m" style="left:6px;top:86px">[2010-07-02 20:18:53] process terminated successfully (elapsed time: 00.92s)</div>
<div class="m" style="left:6px;top:-13px">g</div>
</div>
<div class="a" style="left:954px;top:765px;width:18px;height:117px;background:linear-gradient(to right,#e6e6ee,#f8f8fc 50%,#eeeef4)"></div>
<div class="a" style="left:955px;top:765px;width:16px;height:17px;border:1px solid #b8b8c8;border-radius:2px;background:linear-gradient(#ffffff,#d0d0de)"></div>
<div class="a" style="left:955px;top:797px;width:16px;height:66px;border:1px solid #a8a8bc;border-radius:2px;background:linear-gradient(to right,#f0f0f8,#d8d8e6)"></div>
<div class="a" style="left:955px;top:864px;width:16px;height:17px;border:1px solid #d8d8e0;border-radius:2px;background:linear-gradient(#f8f8fa,#ececf0)"></div>
<svg class="a" style="left:955px;top:765px" width="15" height="16" viewBox="0 0 15 16"><path d="M4 9.5 L7.5 6 L11 9.5" fill="none" stroke="#3a3a3a" stroke-width="2"/></svg>
<svg class="a" style="left:955px;top:864px" width="15" height="16" viewBox="0 0 15 16"><path d="M4 6.5 L7.5 10 L11 6.5" fill="none" stroke="#c8c8d0" stroke-width="2"/></svg>
<svg class="a" style="left:956px;top:827px" width="15" height="8" viewBox="0 0 15 8"><path d="M4.5 1.5 h6 M4.5 3.5 h6 M4.5 5.5 h6" stroke="#9a9ab0" stroke-width="1"/><path d="M4.5 2.5 h6 M4.5 4.5 h6 M4.5 6.5 h6" stroke="#ffffff" stroke-width="1"/></svg>
<div class="a" style="left:254px;top:885px;width:720px;height:19px;background:#6b6b6b"></div>
<div class="a" style="left:256px;top:886px;width:49px;height:16px;background:linear-gradient(#c8c8dc,#ffffff);border:1px solid #a0a8b0"></div>
<div class="t" style="left:257px;top:887px;letter-spacing:-0.25px">Locations</div>
<div class="a" style="left:305px;top:885px;width:57px;height:19px;background:#f8f8fc;border-bottom:3px solid #f0a030"></div>
<div class="t" style="left:309px;top:888px;letter-spacing:-0.35px">Messages</div>
<div class="a" style="left:980px;top:92px;width:129px;height:212px;background:#dfdfe3;border-left:1px solid #a0a0a0;border-top:1px solid #fff;border-right:1px solid #000;border-bottom:1px solid #000"></div>
<div class="a" style="left:979px;top:94px;width:1px;height:210px;background:#fff"></div><div class="a" style="left:981px;top:93px;width:1px;height:210px;background:#fff"></div>
<div class="a ptitle" style="left:983px;top:94px;width:101px"><span style="letter-spacing:-0.3px">Scenario View</span></div>
<div class="a xb" style="left:1085px;top:95px"><svg class="a" style="left:6px;top:2px" width="9" height="8" viewBox="0 0 9 8"><path d="M1.2 0.8 L7.8 6.2 M7.8 0.8 L1.2 6.2" stroke="#000" stroke-width="1.8"/></svg></div>
<div class="a" style="left:981px;top:185px;width:127px;height:22px;overflow:hidden"><div class="t" style="left:1px;top:6px">The project contains no scenario</div></div>
<div class="a" style="left:983px;top:286px;width:124px;height:16px;background:linear-gradient(#e8e8f0,#fafafc 50%,#eeeef4)"></div>
<div class="a" style="left:983px;top:286px;width:16px;height:16px;border:1px solid #d8d8d0;border-radius:2px;background:#eeeee6"></div>
<div class="a" style="left:1000px;top:286px;width:55px;height:16px;border:1px solid #a8a8bc;border-radius:2px;background:linear-gradient(#f0f0f8,#d0d0e0)"></div>
<div class="a" style="left:1090px;top:286px;width:17px;height:16px;border:1px solid #b8b8c8;border-radius:2px;background:linear-gradient(#ffffff,#d0d0de)"></div>
<svg class="a" style="left:983px;top:286px" width="15" height="16" viewBox="0 0 15 16"><path d="M9 4.5 L5.5 8 L9 11.5" fill="none" stroke="#c8c8c0" stroke-width="2"/></svg>
<svg class="a" style="left:1091px;top:286px" width="15" height="16" viewBox="0 0 15 16"><path d="M6 4.5 L9.5 8 L6 11.5" fill="none" stroke="#3a3a3a" stroke-width="2"/></svg>
<svg class="a" style="left:1022px;top:286px" width="10" height="16" viewBox="0 0 10 16"><path d="M1.5 4.5 v7 M3.5 4.5 v7 M5.5 4.5 v7 M7.5 4.5 v7" stroke="#8a8aa0" stroke-width="1"/><path d="M2.5 4.5 v7 M4.5 4.5 v7 M6.5 4.5 v7 M8.5 4.5 v7" stroke="#ffffff" stroke-width="1"/></svg>
<div class="a" style="left:980px;top:309px;width:129px;height:595px;background:#fff;border-left:1px solid #a0a0a0;border-top:1px solid #fff;border-right:1px solid #000;border-bottom:1px solid #000"></div>
<div class="a" style="left:979px;top:311px;width:1px;height:593px;background:#fff"></div><div class="a" style="left:981px;top:310px;width:1px;height:593px;background:#fff"></div>
<div class="a ptitle" style="left:983px;top:312px;width:101px"><span style="letter-spacing:-0.2px">Outline View</span></div>
<div class="a xb" style="left:1085px;top:313px"><svg class="a" style="left:6px;top:2px" width="9" height="8" viewBox="0 0 9 8"><path d="M1.2 0.8 L7.8 6.2 M7.8 0.8 L1.2 6.2" stroke="#000" stroke-width="1.8"/></svg></div>
<svg class="a" style="left:986px;top:333px" width="8" height="8" viewBox="0 0 8 8"><circle cx="4" cy="4" r="2.6" fill="#fff" stroke="#e07820" stroke-width="1.6"/></svg>
<div class="m" style="left:1004px;top:333px">Window_Proc <span style="color:#808080">(</span></div>
<div class="a" style="left:987px;top:358px;width:6px;height:6px;background:#20b040;border-radius:1px"></div>
<div class="m" style="left:1004px;top:357px">Wndproc</div>
<svg class="a" style="left:986px;top:381px" width="8" height="8" viewBox="0 0 8 8"><circle cx="4" cy="4" r="2.6" fill="#fff" stroke="#e07820" stroke-width="1.6"/></svg>
<div class="m" style="left:1004px;top:381px">myEnumProc <span style="color:#808080">(h</span></div>
<div class="a" style="left:982px;top:885px;width:126px;height:18px;background:linear-gradient(#e8e8f0,#fafafc 50%,#eeeef4)"></div>
<div class="a" style="left:983px;top:886px;width:16px;height:16px;border:1px solid #d8d8d0;border-radius:2px;background:#eeeee6"></div>
<div class="a" style="left:999px;top:886px;width:13px;height:16px;border:1px solid #a8a8bc;border-radius:2px;background:linear-gradient(#f0f0f8,#d0d0e0)"></div>
<div class="a" style="left:1090px;top:886px;width:17px;height:16px;border:1px solid #b8b8c8;border-radius:2px;background:linear-gradient(#ffffff,#d0d0de)"></div>
<svg class="a" style="left:983px;top:886px" width="15" height="16" viewBox="0 0 15 16"><path d="M9 4.5 L5.5 8 L9 11.5" fill="none" stroke="#c8c8c0" stroke-width="2"/></svg>
<svg class="a" style="left:1091px;top:886px" width="15" height="16" viewBox="0 0 15 16"><path d="M6 4.5 L9.5 8 L6 11.5" fill="none" stroke="#3a3a3a" stroke-width="2"/></svg>
</div></body></html>
